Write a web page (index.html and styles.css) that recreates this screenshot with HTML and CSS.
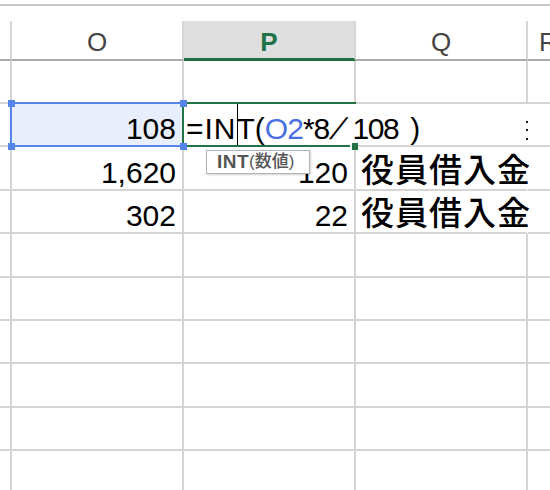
FILE: index.html
```html
<!DOCTYPE html>
<html lang="ja">
<head>
<meta charset="utf-8">
<title>Sheet</title>
<link rel="stylesheet" href="styles.css">
</head>
<body>
<div class="sheet">
  <div class="topline"></div>
  <div class="grid">
    <div class="hd stub"></div>
    <div class="hd">O</div>
    <div class="hd hd-active">P</div>
    <div class="hd">Q</div>
    <div class="hd last hd-r">R</div>

    <div class="c stub"></div><div class="c"></div><div class="c p1"></div><div class="c"></div><div class="c last"></div>

    <div class="c stub"></div>
    <div class="c num ref">108</div>
    <div class="c edit">
      <span class="fx"><span class="fx-a">=IN</span><span class="caret"></span>T(<span class="fx-ref">O2</span><span class="fx-b">*8</span><span class="fx-slash">/</span><span class="fx-num">108</span><span class="fx-close">)</span></span>
      <svg class="dots" width="3" height="41" viewBox="0 0 3 41"><rect x="1" y="17" width="2" height="2" fill="#1a1a1a"/><rect x="1" y="25" width="2" height="2" fill="#1a1a1a"/><rect x="1" y="34" width="2" height="2" fill="#1a1a1a"/></svg>
    </div>
    <div class="c last"></div>

    <div class="c stub"></div><div class="c num">1,620</div><div class="c num">120</div><div class="c txt spill">役員借入金</div><div class="c last"></div>
    <div class="c stub"></div><div class="c num">302</div><div class="c num">22</div><div class="c txt spill">役員借入金</div><div class="c last"></div>

    <div class="c stub"></div><div class="c"></div><div class="c"></div><div class="c"></div><div class="c last"></div>
    <div class="c stub"></div><div class="c"></div><div class="c"></div><div class="c"></div><div class="c last"></div>
    <div class="c stub"></div><div class="c"></div><div class="c"></div><div class="c"></div><div class="c last"></div>
    <div class="c stub"></div><div class="c"></div><div class="c"></div><div class="c"></div><div class="c last"></div>
    <div class="c stub"></div><div class="c"></div><div class="c"></div><div class="c"></div><div class="c last"></div>
    <div class="c stub"></div><div class="c"></div><div class="c"></div><div class="c"></div><div class="c last"></div>
  </div>

  <div class="frame-active"><span class="fill-handle"></span></div>
  <div class="frame-ref"><span class="h tl"></span><span class="h tr"></span><span class="h bl"></span><span class="h br"></span></div>
  <div class="tip"><b class="tip-fn">INT</b><span class="tip-arg">(数値)</span></div>
</div>
</body>
</html>
```
FILE: styles.css
```css
html, body {
  margin: 0;
  padding: 0;
  background: #ffffff;
  overflow: hidden;
  width: 550px;
  height: 490px;
}
body {
  font-family: "Liberation Sans", "Noto Sans CJK JP", sans-serif;
  color: #000;
}
.sheet {
  position: relative;
  padding-top: 4px;
}
.topline {
  border-top: 2px solid #c9c9c9;
  height: 15px;
}
.grid {
  display: grid;
  grid-template-columns: 12px 172px 172px 172px 1fr;
  grid-template-rows: 40px 43px 43px 44px 43px 44px 43px 43px 44px 43px 43px;
}
.grid > div {
  box-sizing: border-box;
  min-width: 0;
}
.hd {
  border-right: 2px solid #d6d6d6;
  border-bottom: 2px solid #ababab;
  display: flex;
  align-items: flex-end;
  justify-content: center;
  font-size: 26px;
  line-height: 26px;
  padding-bottom: 4px;
  color: #444;
}
.hd-active {
  background: #dedede;
  color: #217346;
  font-weight: 700;
  border-bottom: 3px solid #217346;
  padding-bottom: 3px;
}
.hd-r {
  justify-content: flex-start;
  padding-left: 11px;
  overflow: hidden;
}
.c {
  border-right: 2px solid #d4d4d4;
  border-bottom: 2px solid #d4d4d4;
}
.last {
  border-right: 0;
}
.num {
  display: flex;
  justify-content: flex-end;
  align-items: flex-end;
  padding: 0 6px 1px 0;
  font-size: 30px;
  line-height: 30px;
  white-space: nowrap;
}
.ref {
  background: #e8eefb;
}
.txt {
  display: flex;
  align-items: flex-end;
  padding: 0 0 4px 5px;
  font-family: "Noto Sans CJK JP", sans-serif;
  font-size: 33px;
  line-height: 33px;
  font-weight: 500;
  letter-spacing: 1px;
  white-space: nowrap;
}
.spill {
  border-right-color: transparent;
}
.edit {
  grid-column: span 2;
  border-right: 0;
  display: flex;
  align-items: flex-end;
  padding-left: 2px;
  background: #fff;
}
.fx {
  font-size: 30px;
  line-height: 30px;
  white-space: nowrap;
}
.fx-a {
  letter-spacing: 1px;
}
.caret {
  display: inline-block;
  width: 1px;
  height: 41px;
  margin-right: -1px;
  background: #000;
  vertical-align: -6px;
}
.fx-ref {
  color: #4a6fe3;
  letter-spacing: -1px;
}
.fx-b {
  letter-spacing: -1px;
}
.fx-slash {
  display: inline-block;
  transform: skewX(-27deg);
  margin: 0 10px 0 5px;
}
.fx-num {
  letter-spacing: -1.5px;
}
.fx-close {
  margin-left: 12px;
}
.dots {
  margin-left: auto;
  align-self: stretch;
  display: block;
}
.frame-active {
  position: absolute;
  left: 182px;
  top: 102px;
  width: 174px;
  height: 45px;
  box-sizing: border-box;
  border-left: 2px solid #217346;
  border-top: 2px solid #217346;
  border-bottom: 2px solid #217346;
}
.fill-handle {
  position: absolute;
  right: -2px;
  bottom: -5px;
  width: 6px;
  height: 7px;
  background: #217346;
  border-left: 2px solid #fff;
}
.frame-ref {
  position: absolute;
  left: 10px;
  top: 102px;
  width: 174px;
  height: 45px;
  box-sizing: border-box;
  border: 2px solid #5585e8;
  border-right-color: transparent;
}
.h {
  position: absolute;
  width: 7px;
  height: 7px;
  background: #5585e8;
}
.tl { left: -4px; top: -4px; }
.tr { right: -5px; top: -4px; }
.bl { left: -4px; bottom: -5px; }
.br { right: -5px; bottom: -5px; }
.tip {
  position: absolute;
  left: 206px;
  top: 150px;
  width: 104px;
  height: 24px;
  box-sizing: border-box;
  border: 1px solid #b3b3b3;
  background: #fff;
  box-shadow: 1px 1px 2px rgba(0, 0, 0, 0.18);
  padding: 0 0 0 10px;
  display: flex;
  align-items: center;
  color: #555;
  font-size: 19px;
  line-height: 20px;
  white-space: nowrap;
}
.tip-fn {
  font-weight: 700;
  letter-spacing: 0.5px;
}
.tip-arg {
  font-size: 17px;
  font-weight: 500;
}
```
